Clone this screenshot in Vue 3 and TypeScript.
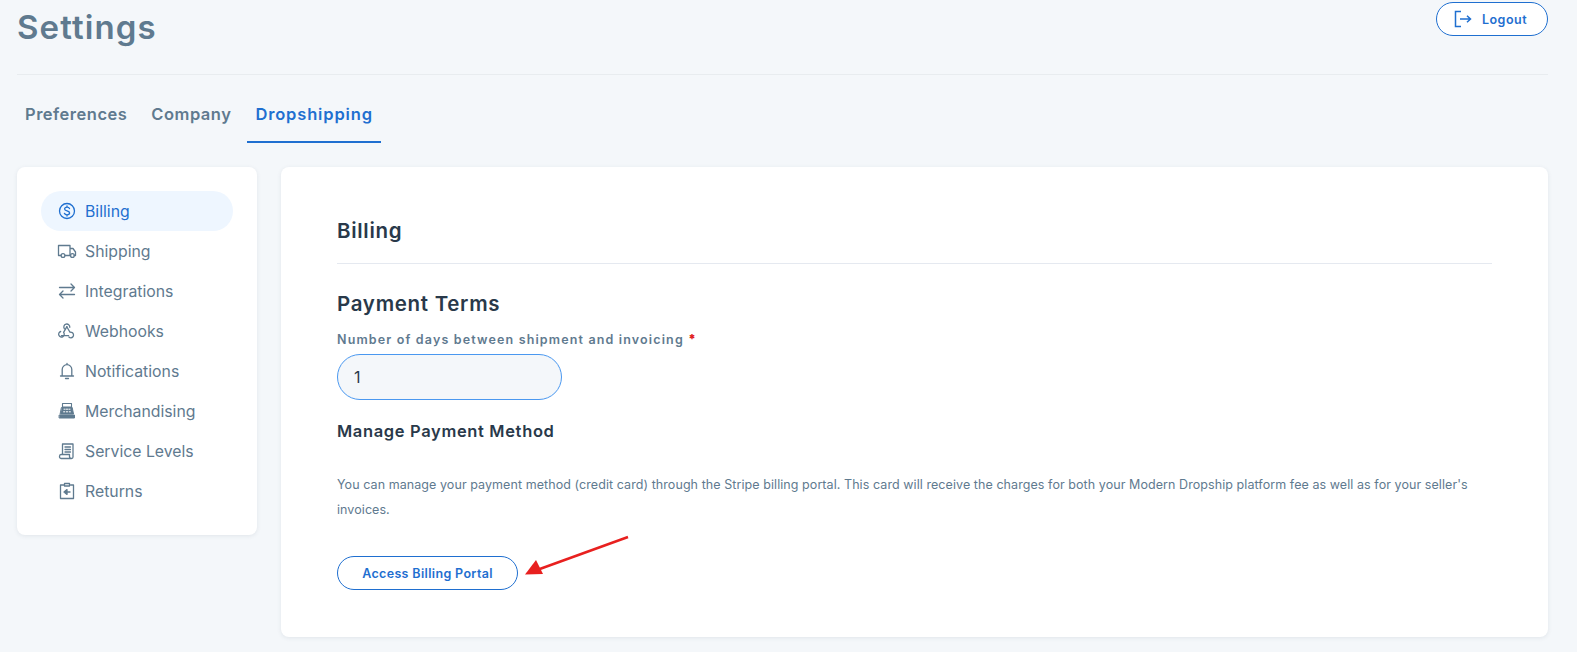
<script setup lang="ts">
const navItems: { label: string; icon: string; active?: boolean }[] = [
  { label: 'Billing', icon: 'billing', active: true },
  { label: 'Shipping', icon: 'shipping' },
  { label: 'Integrations', icon: 'integrations' },
  { label: 'Webhooks', icon: 'webhooks' },
  { label: 'Notifications', icon: 'notifications' },
  { label: 'Merchandising', icon: 'merch' },
  { label: 'Service Levels', icon: 'service' },
  { label: 'Returns', icon: 'returns' },
]
const tabs = ['Preferences', 'Company', 'Dropshipping']
</script>

<template>
  <div class="page">
    <header class="head">
      <h1 class="title">Settings</h1>
      <button class="btn logout">
        <svg width="20" height="20" viewBox="0 0 20 20" fill="none" stroke="currentColor" stroke-width="1.500">
          <path d="M8 2.500H2.500v15H8" />
          <path d="M7 10h10.500M14 6.800l3.500 3.200-3.500 3.200" />
        </svg>
        <span>Logout</span>
      </button>
    </header>
    <nav class="tabs">
      <a v-for="t in tabs" :key="t" class="tab" :class="{ on: t === 'Dropshipping' }">{{ t }}</a>
    </nav>
    <div class="cols">
      <aside class="side card">
        <a v-for="n in navItems" :key="n.label" class="item" :class="{ on: n.active }">
          <svg class="ico" width="20" height="20" viewBox="0 0 20 20" fill="none" stroke="currentColor" stroke-width="1.300" stroke-linecap="round" stroke-linejoin="round">
            <template v-if="n.icon === 'billing'">
              <circle cx="10" cy="10" r="7.500" />
              <path d="M12.500 7.600c-.4-.9-1.300-1.400-2.500-1.400-1.400 0-2.400.7-2.400 1.800 0 2.600 5 1.300 5 4 0 1.100-1.100 1.800-2.600 1.800-1.200 0-2.200-.5-2.600-1.500M10 5v1.200M10 13.800V15" />
            </template>
            <template v-else-if="n.icon === 'shipping'">
              <path d="M3.800 14.500H1.500V4.500h11.500v10H8.200M13 7.500h3l2.500 3.500v3.500h-1.300M13 14.500h.6" />
              <circle cx="6" cy="14.500" r="1.900" />
              <circle cx="15.400" cy="14.500" r="1.900" />
            </template>
            <template v-else-if="n.icon === 'integrations'">
              <path d="M2.500 6.500h15M14 3 17.500 6.500 14 10M17.500 13.500h-15M6 10 2.500 13.500 6 17" />
            </template>
            <template v-else-if="n.icon === 'webhooks'">
              <path d="M7.400 7.800A3 3 0 1 1 12.800 6.300" />
              <path d="M9.900 5.600 6.600 11.400a2.800 2.800 0 1 1-2.900-.9" />
              <path d="M9.800 5.700 13 11.300a2.800 2.800 0 1 1 .9 5.500 3 3 0 0 1-2-.8" />
              <path d="M4.400 14.600h7.200" />
            </template>
            <template v-else-if="n.icon === 'notifications'">
              <path d="M5.200 15V8.500a4.800 4.800 0 0 1 9.600 0V15M3.500 15h13M10 2.300v1.400M8.500 17.500h3" />
            </template>
            <template v-else-if="n.icon === 'merch'">
              <path d="M5.500 2.500h9v3.500h-9z" stroke-width="1.100" />
              <path d="M4.800 6.500h10.400l1.300 6.500h-13z" fill="currentColor" stroke-width="1" />
              <path d="M7 8.200h1.200M9.400 8.200h1.200M11.800 8.200H13M6.600 10.800h1.200M9.400 10.800h1.200M12.200 10.800h1.200" stroke="#fff" stroke-width="1" />
              <path d="M2.500 14h15v3h-15z" fill="currentColor" stroke-width="1" />
            </template>
            <template v-else-if="n.icon === 'service'">
              <path d="M5.500 13.500V3h10.500v13c0 1-.7 1.500-1.500 1.500H4c-1 0-1.500-.8-1.500-2s.5-2 1.500-2h8.500v2c0 1 .7 2 2 2" />
              <path d="M8 6h5.500M8 8.500h5.500M8 11h5.500" />
            </template>
            <template v-else-if="n.icon === 'returns'">
              <path d="M7 4H3.500v13.500h13V4h-3" />
              <path d="M7.500 2.500h5V5h-5z" />
              <path d="M13 11H8.500" stroke-width="1.400" />
              <path d="M10 8.600 7 11l3 2.400z" fill="currentColor" />
            </template>
          </svg>
          <span>{{ n.label }}</span>
        </a>
      </aside>
      <main class="main card">
        <h2 class="h-billing">Billing</h2>
        <h3 class="h-terms">Payment Terms</h3>
        <label class="lbl">Number of days between shipment and invoicing <b>*</b></label>
        <input class="field" value="1" />
        <h4 class="h-manage">Manage Payment Method</h4>
        <p class="copy">You can manage your payment method (credit card) through the Stripe billing portal. This card will receive the charges for both your Modern Dropship platform fee as well as for your seller's invoices.</p>
        <button class="btn portal">Access Billing Portal</button>
        <svg class="arrow" width="110" height="46" viewBox="0 0 110 46" fill="none">
          <path d="M105 3 14 36" stroke="#e8201f" stroke-width="2.500" />
          <path d="M2 40.500 13 26l7 14z" fill="#e8201f" />
        </svg>
      </main>
    </div>
  </div>
</template>

<style scoped>
.page {
  width: 1577px;
  height: 652px;
  box-sizing: border-box;
  padding: 0 29px 0 17px;
  background: #f4f7fa;
  overflow: hidden;
  font-family: Inter, "Liberation Sans", sans-serif;
  color: #5f7a8f;
}
.head {
  display: flex;
  justify-content: space-between;
  align-items: flex-start;
  height: 74px;
  border-bottom: 1px solid #e8ecef;
}
.title {
  margin: 9px 0 0;
  font: 600 33px/36px Inter, sans-serif;
  letter-spacing: 1.100px;
  color: #5f7a8f;
}
.btn {
  background: #fff;
  border: 1px solid #1f6fd0;
  border-radius: 18px;
  color: #1f6fd0;
  font-family: Inter, sans-serif;
  font-weight: 600;
  font-size: 12.500px;
  letter-spacing: .35px;
  display: flex;
  align-items: center;
  justify-content: center;
  padding: 0;
}
.logout {
  width: 112px;
  height: 34px;
  margin-top: 2px;
  gap: 9px;
  padding-right: 4px;
  letter-spacing: .5px;
}
.tabs {
  display: flex;
  height: 68px;
  border: 0;
}
.tab {
  height: 68px;
  box-sizing: border-box;
  padding: 29px 8px 0;
  margin-right: 8px;
  font-size: 16.500px;
  line-height: 20px;
  font-weight: 600;
  letter-spacing: .5px;
  color: #5f7a8f;
}
.tab.on {
  color: #1f6fd0;
  letter-spacing: .85px;
  border-bottom: 2px solid #1f6fd0;
}
.cols {
  display: flex;
  gap: 24px;
  align-items: flex-start;
  margin-top: 24px;
}
.card {
  background: #fff;
  border-radius: 8px;
  box-shadow: 0 1px 4px rgba(60, 80, 100, .1);
  box-sizing: border-box;
}
.side {
  width: 240px;
  height: 368px;
  padding: 24px;
}
.item {
  display: flex;
  align-items: center;
  gap: 8px;
  height: 40px;
  padding-left: 16px;
  border-radius: 20px;
  font-size: 15.800px;
}
.item.on {
  background: #eef6ff;
  color: #1f6fd0;
}
.main {
  position: relative;
  width: 1267px;
  height: 470px;
  padding: 50px 56px 0;
  color: #29394a;
}
h2, h3, h4, p { margin: 0; }
.h-billing {
  font: 600 20.500px/28px Inter, sans-serif;
  letter-spacing: .7px;
  padding-bottom: 18px;
  border-bottom: 1px solid #e5e9f0;
}
.h-terms {
  margin-top: 26px;
  font: 600 20.500px/28px Inter, sans-serif;
  letter-spacing: .7px;
}
.lbl {
  display: block;
  margin-top: 14px;
  font-size: 12.500px;
  line-height: 16px;
  font-weight: 600;
  letter-spacing: 1.150px;
  color: #5f7a8f;
}
.lbl b { color: #e02020; }
.field {
  display: block;
  box-sizing: border-box;
  width: 225px;
  height: 46px;
  margin-top: 6px;
  padding: 0 16px;
  background: #f4f7fa;
  border: 1px solid #4a98f0;
  border-radius: 23px;
  font: 400 16px Inter, sans-serif;
  color: #29394a;
  outline: none;
}
.h-manage {
  margin-top: 19px;
  font: 600 16.500px/24px Inter, sans-serif;
  letter-spacing: .65px;
}
.copy {
  margin-top: 29px;
  font-size: 12.500px;
  line-height: 25px;
  letter-spacing: .07px;
  color: #5f7a8f;
}
.portal {
  width: 181px;
  height: 34px;
  margin-top: 34px;
}
.arrow {
  position: absolute;
  left: 242px;
  top: 367px;
}
</style>

<style>
body { background: #f4f7fa; }
</style>
